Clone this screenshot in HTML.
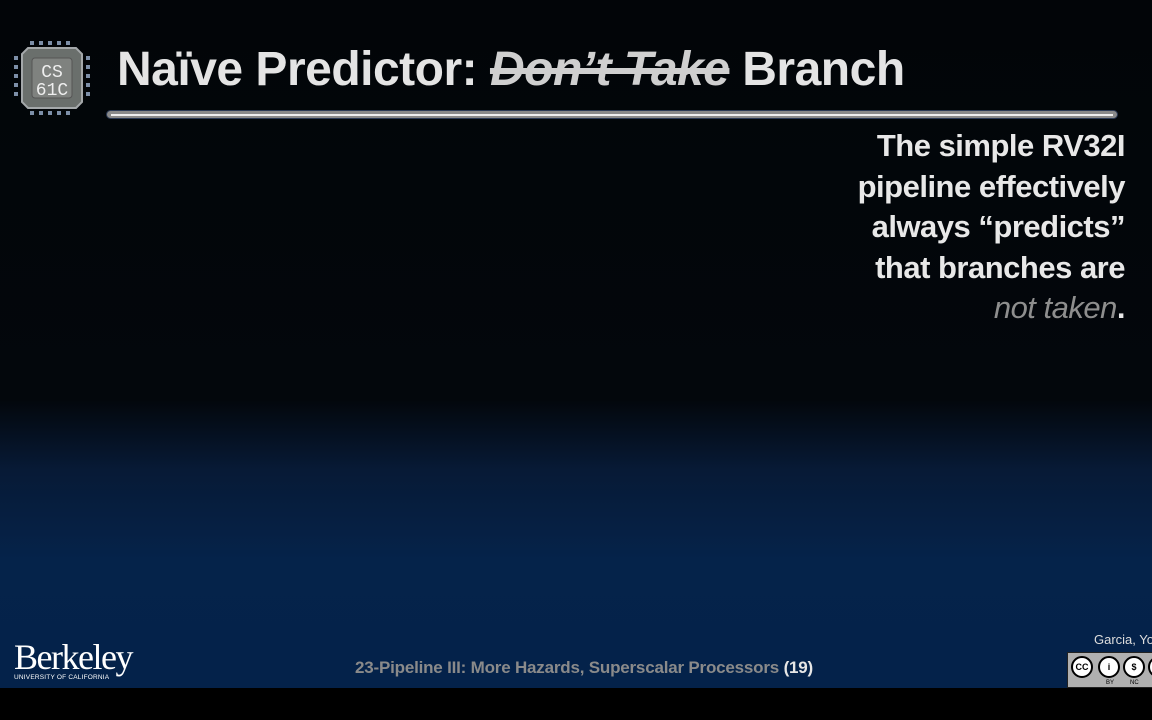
<!DOCTYPE html>
<html><head><meta charset="utf-8"><style>
html,body{margin:0;padding:0}
body{width:1152px;height:720px;position:relative;overflow:hidden;font-family:"Liberation Sans",sans-serif;
background:linear-gradient(to bottom,#020508 0px,#03070c 400px,#071a36 470px,#05234a 560px,#04224a 688px,#000 688px,#000 720px);}
.logo{position:absolute;left:14px;top:40px;width:76px;height:76px}
.title{position:absolute;left:117px;top:42px;font-size:48px;font-weight:bold;color:#e4e4e4;letter-spacing:-0.5px;white-space:nowrap}
.title i{color:#cfcfcf;text-decoration:line-through;text-decoration-thickness:6px}
.bar{position:absolute;left:106px;top:110px;width:1012px;height:9px;border-radius:5px;background:#8a8a8a;border:1px solid #2b3a55;box-sizing:border-box}
.bar:after{content:"";position:absolute;left:4px;right:4px;top:3px;height:2px;background:#eee}
.body{position:absolute;right:27px;top:126px;text-align:right;font-size:31px;font-weight:bold;color:#e8e8e8;line-height:40.5px;letter-spacing:-0.5px}
.body i{font-weight:normal;color:#8e8e8e}
.berk{position:absolute;left:14px;top:638px;color:#fff;font-family:"Liberation Serif",serif;font-size:36px;letter-spacing:-1.5px;line-height:38px}
.berk small{display:block;font-family:"Liberation Sans",sans-serif;font-size:6.5px;letter-spacing:0.2px;line-height:8px;margin-top:-2px}
.foot{position:absolute;left:355px;top:658px;font-size:17px;font-weight:bold;color:#8a8a8a;letter-spacing:-0.2px;white-space:nowrap}
.foot b{color:#e6e6e6}
.garcia{position:absolute;left:1094px;top:632px;font-size:13px;color:#ddd;white-space:nowrap}
.cc{position:absolute;left:1067px;top:652px;width:90px;height:36px;background:#b0b0b0;border:1px solid #222;box-sizing:border-box}
.cc span{position:absolute;top:3px;width:22px;height:22px;border-radius:50%;background:#fff;border:2px solid #000;box-sizing:border-box;font-size:9px;font-weight:bold;text-align:center;line-height:18px}
.cc em{position:absolute;top:27px;font-size:6px;font-style:normal;color:#000}
</style></head><body>
<svg class="logo" viewBox="0 0 76 76">
<g fill="#7d8fa8">
<rect x="16" y="1" width="4" height="4"/><rect x="25" y="1" width="4" height="4"/><rect x="34" y="1" width="4" height="4"/><rect x="43" y="1" width="4" height="4"/><rect x="52" y="1" width="4" height="4"/>
<rect x="16" y="71" width="4" height="4"/><rect x="25" y="71" width="4" height="4"/><rect x="34" y="71" width="4" height="4"/><rect x="43" y="71" width="4" height="4"/><rect x="52" y="71" width="4" height="4"/>
<rect x="0" y="16" width="4" height="4"/><rect x="0" y="25" width="4" height="4"/><rect x="0" y="34" width="4" height="4"/><rect x="0" y="43" width="4" height="4"/><rect x="0" y="52" width="4" height="4"/>
<rect x="72" y="16" width="4" height="4"/><rect x="72" y="25" width="4" height="4"/><rect x="72" y="34" width="4" height="4"/><rect x="72" y="43" width="4" height="4"/><rect x="72" y="52" width="4" height="4"/>
</g>
<path d="M14 8H62L68 14V62L62 68H14L8 62V14Z" fill="#6a6f6c" stroke="#a4a8aa" stroke-width="2"/>
<rect x="18" y="18" width="40" height="40" rx="3" fill="#7f827f" stroke="#555" stroke-width="1"/>
<text x="38" y="37" text-anchor="middle" font-family="Liberation Mono" font-size="18" fill="#eee">CS</text>
<text x="38" y="55" text-anchor="middle" font-family="Liberation Mono" font-size="18" fill="#eee">61C</text>
</svg>
<div class="title">Naïve Predictor: <i>Don’t Take</i> Branch</div>
<div class="bar"></div>
<div class="body">The simple RV32I<br>pipeline effectively<br>always “predicts”<br>that branches are<br><i>not taken</i>.</div>
<div class="berk">Berkeley<small>UNIVERSITY OF CALIFORNIA</small></div>
<div class="foot">23-Pipeline III: More Hazards, Superscalar Processors <b>(19)</b></div>
<div class="garcia">Garcia, Yo</div>
<div class="cc"><span style="left:3px">CC</span><span style="left:30px">i</span><span style="left:55px">$</span><span style="left:80px">=</span><em style="left:38px">BY</em><em style="left:62px">NC</em></div>
</body></html>
